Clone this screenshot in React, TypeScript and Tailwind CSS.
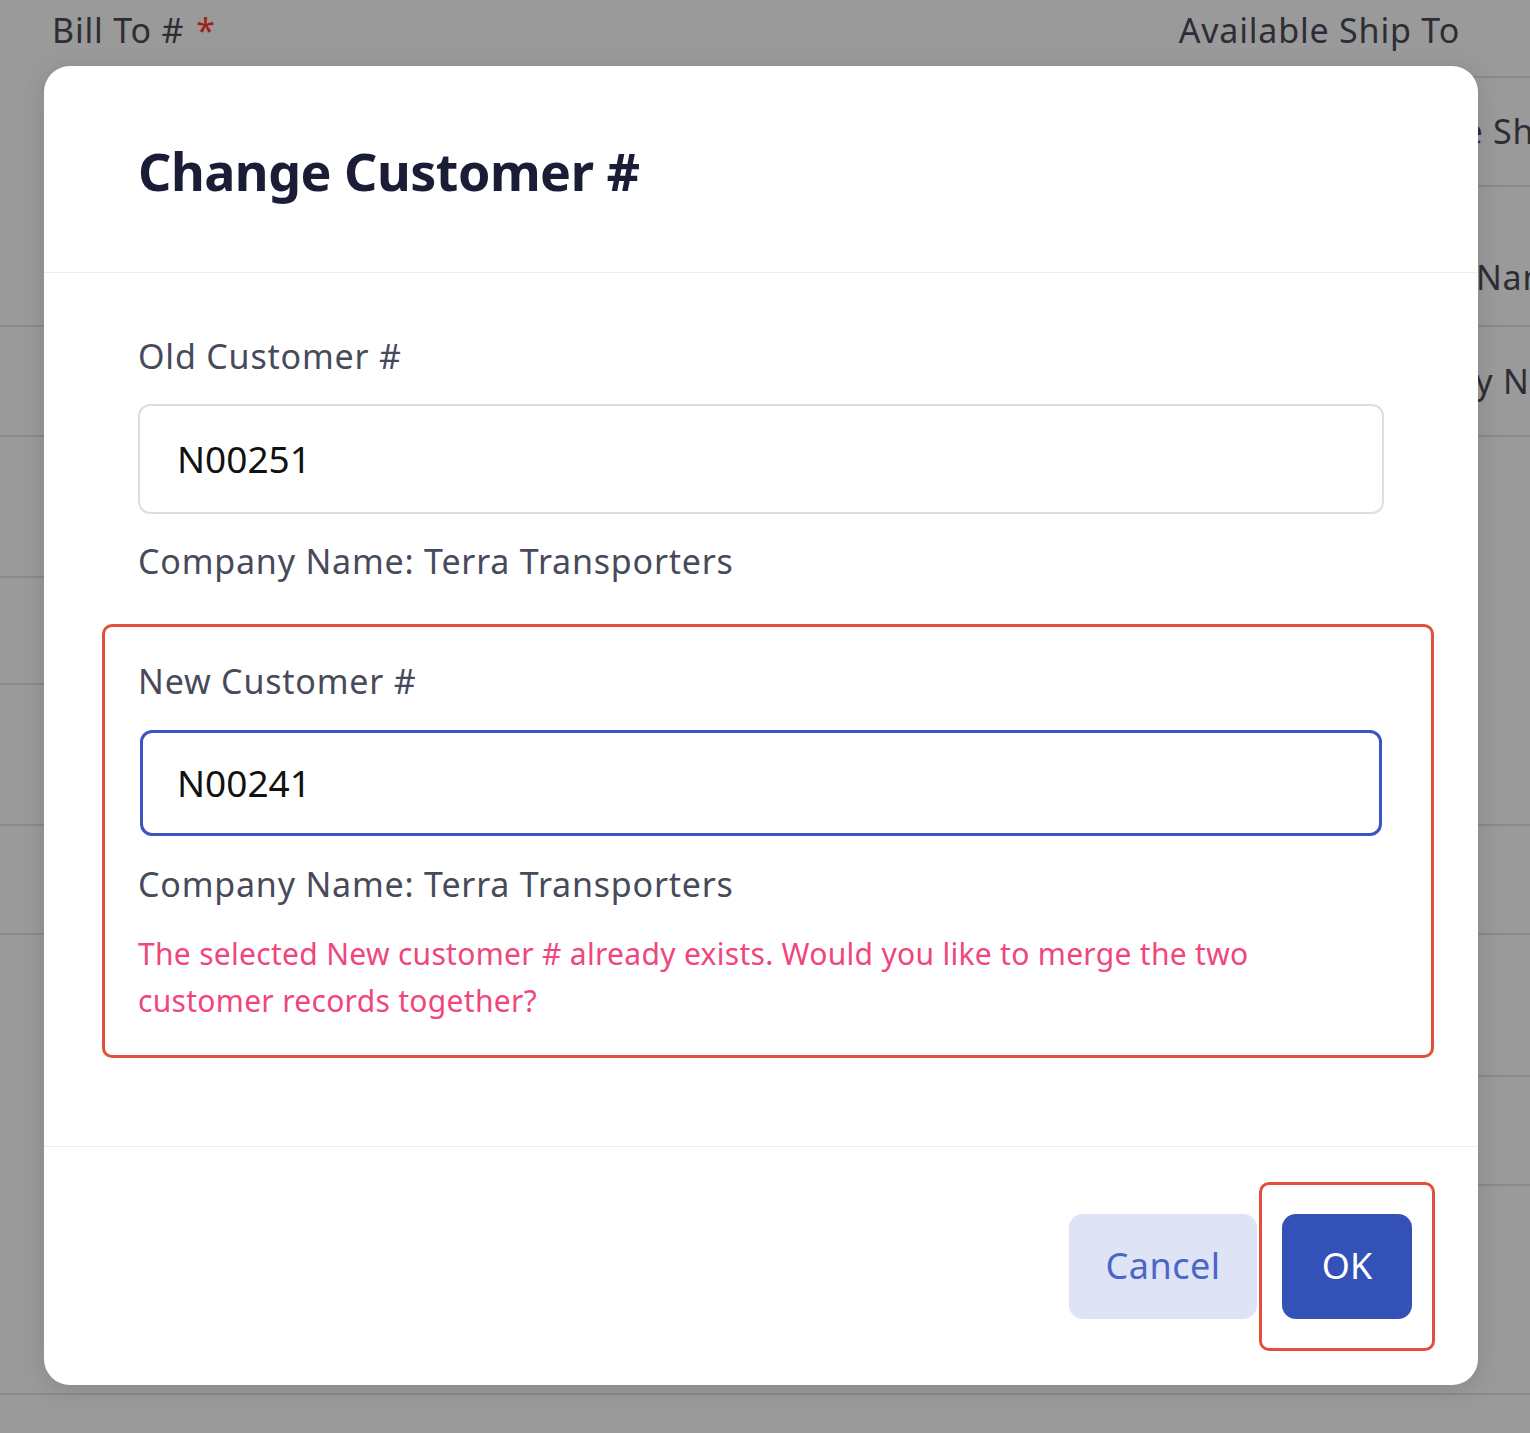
import React from "react";

const font = { fontFamily: '"Noto Sans", "Open Sans", sans-serif' };

export default function App() {
  return (
    <div
      className="relative h-[1433px] w-[1530px] overflow-hidden bg-[#9a9a9a] text-[#2d2d35]"
      style={font}
    >
      {/* background page (dimmed) */}
      <div className="flex h-full w-full">
        <div className="flex w-[760px] flex-col">
          <div className="flex h-[60px] items-center pl-[52px] text-[34px] leading-none tracking-[0.8px]">
            Bill To # <span className="ml-[12px] text-[#9e1f1a]">*</span>
          </div>
          <div className="h-[267px] border-b-2 border-[#8a8a8a]" />
          <div className="h-[110px] border-b-2 border-[#8a8a8a]" />
          <div className="h-[141px] border-b-2 border-[#8a8a8a]" />
          <div className="h-[107px] border-b-2 border-[#8a8a8a]" />
          <div className="h-[141px] border-b-2 border-[#8a8a8a]" />
          <div className="h-[109px] border-b-2 border-[#8a8a8a]" />
          <div className="h-[460px] border-b-2 border-[#8a8a8a]" />
        </div>
        <div className="flex flex-1 flex-col">
          <div className="flex h-[60px] items-center justify-end pr-[70px] text-[34px] leading-none tracking-[0.8px]">
            Available Ship To
          </div>
          <div className="h-[18px] border-b-2 border-[#8a8a8a]" />
          <div className="flex h-[109px] items-center justify-end border-b-2 border-[#8a8a8a] text-[34px] tracking-[0.8px] whitespace-nowrap">
            <span className="mr-[-84px]">Use Same Ship To</span>
          </div>
          <div className="flex h-[140px] items-end justify-end border-b-2 border-[#8a8a8a] pb-[22px] text-[34px] tracking-[0.8px] whitespace-nowrap">
            <span className="mr-[-45px]">Name</span>
          </div>
          <div className="flex h-[110px] items-center justify-end border-b-2 border-[#8a8a8a] text-[34px] tracking-[0.8px] whitespace-nowrap">
            <span className="mr-[-72px]">Company Name</span>
          </div>
          <div className="h-[389px] border-b-2 border-[#8a8a8a]" />
          <div className="h-[109px] border-b-2 border-[#8a8a8a]" />
          <div className="h-[142px] border-b-2 border-[#8a8a8a]" />
          <div className="h-[109px] border-b-2 border-[#8a8a8a]" />
          <div className="h-[209px] border-b-2 border-[#8a8a8a]" />
        </div>
      </div>

      {/* modal */}
      <div className="absolute left-[44px] top-[66px] w-[1434px] rounded-[26px] bg-white shadow-[0_4px_24px_rgba(0,0,0,0.12)]">
        <div className="flex h-[206px] items-center pl-[94px]">
          <h2 className="pt-[4px] text-[52px] font-bold leading-none tracking-[-0.5px] text-[#1b1d36]">
            Change Customer #
          </h2>
        </div>
        <div className="h-[1px] bg-[#ececf3]" />

        <div className="px-[94px] pt-[59px] pb-[88px]">
          <div className="text-[34px] leading-[48px] tracking-[0.8px] text-[#474a5b]">Old Customer #</div>
          <div className="mt-[24px] flex h-[110px] items-center rounded-[12px] border-2 border-[#dedede] pl-[37px] text-[37px] text-[#111]">
            N00251
          </div>
          <div className="mt-[23px] text-[34px] leading-[48px] tracking-[0.8px] text-[#474a5b]">
            Company Name: Terra Transporters
          </div>

          <div className="mt-[39px] -ml-[36px] -mr-[50px] rounded-[10px] border-[3px] border-[#e2503d] pl-[33px] pr-[47px] pt-[30px] pb-[31px]">
            <div className="text-[34px] leading-[48px] tracking-[0.8px] text-[#474a5b]">New Customer #</div>
            <div className="mx-[2px] mt-[25px] flex h-[106px] items-center rounded-[12px] border-[3px] border-[#3a55c3] pl-[34px] text-[37px] text-[#111]">
              N00241
            </div>
            <div className="mt-[24px] text-[34px] leading-[48px] tracking-[0.8px] text-[#474a5b]">
              Company Name: Terra Transporters
            </div>
            <div className="mt-[22px] max-w-[1150px] text-[30px] leading-[47px] tracking-[0.3px] text-[#f0467b]">
              The selected New customer # already exists. Would you like to merge the two customer records together?
            </div>
          </div>
        </div>

        <div className="h-[1px] bg-[#ececf3]" />
        <div className="flex h-[238px] items-center justify-end pr-[43px]">
          <button className="flex h-[105px] w-[188px] items-center justify-center rounded-[14px] bg-[#dee3f5] text-[36px] tracking-[0.5px] text-[#4a66c6]">
            Cancel
          </button>
          <div className="ml-[2px] rounded-[10px] border-[3px] border-[#e2503d] px-[20px] py-[29px]">
            <button className="flex h-[105px] w-[130px] items-center justify-center rounded-[14px] bg-[#3451b8] text-[36px] text-white">
              OK
            </button>
          </div>
        </div>
      </div>
    </div>
  );
}
